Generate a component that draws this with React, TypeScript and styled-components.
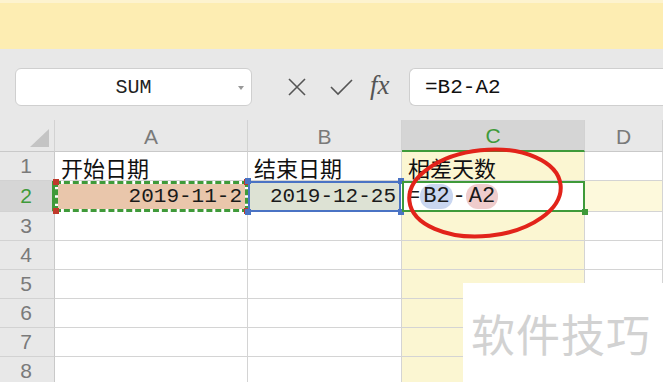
import React from 'react'
import styled, { createGlobalStyle } from 'styled-components'

const GlobalStyle = createGlobalStyle`
  html, body {
    margin: 0;
    padding: 0;
    width: 663px;
    height: 382px;
    overflow: hidden;
    background: #ffffff;
  }
`

const COLS = '55px 193px 154px 183px 1fr'
const ROWS = '32px 29px 31px 29px 29px 29px 29px 29px 29px'

const Page = styled.div`
  width: 663px;
  height: 382px;
  display: flex;
  flex-direction: column;
  overflow: hidden;
  position: relative;
  font-family: 'Liberation Sans', Arial, sans-serif;
`

const Ribbon = styled.div`
  height: 49px;
  flex: none;
  background: #fdedb2;
  border-top: 3px solid #fdf3cf;
  box-sizing: border-box;
`

const Toolbar = styled.div`
  height: 71px;
  flex: none;
  background: #e8e8e8;
  display: flex;
  align-items: flex-start;
  padding: 19px 0 0 15px;
  box-sizing: border-box;
`

const NameBox = styled.div`
  width: 237px;
  height: 38px;
  box-sizing: border-box;
  background: #fff;
  border: 1px solid #cfcfcf;
  border-radius: 6px;
  display: flex;
  align-items: center;
  justify-content: center;
  position: relative;
  font-family: 'Liberation Mono', monospace;
  font-size: 20px;
  color: #222;
`

const Caret = styled.span`
  position: absolute;
  right: 7px;
  top: 17px;
  width: 0;
  height: 0;
  border-left: 3px solid transparent;
  border-right: 3px solid transparent;
  border-top: 4px solid #999;
`

const Tools = styled.div`
  display: flex;
  align-items: center;
  height: 38px;
  gap: 22px;
  margin-left: 35px;
  width: 122px;
`

const Fx = styled.span`
  font-family: 'Liberation Serif', serif;
  font-style: italic;
  font-size: 27px;
  color: #555;
  margin-left: -6px;
  margin-top: -3px;
`

const FormulaBox = styled.div`
  flex: 1;
  height: 38px;
  box-sizing: border-box;
  background: #fff;
  border: 1px solid #cfcfcf;
  border-right: none;
  border-radius: 6px 0 0 6px;
  display: flex;
  align-items: center;
  padding-left: 15px;
  font-family: 'Liberation Mono', monospace;
  font-size: 21px;
  color: #111;
`

const Sheet = styled.div`
  flex: 1;
  display: grid;
  grid-template-columns: ${COLS};
  grid-template-rows: ${ROWS};
  position: relative;
`

const ColHead = styled.div<{ $active?: boolean }>`
  background: ${(p) => (p.$active ? '#d5d5d5' : '#e8e8e8')};
  border-right: 1px solid #d2d2d2;
  border-bottom: ${(p) => (p.$active ? '2px solid #3f9a3a' : '1px solid #c9c9c9')};
  display: flex;
  align-items: center;
  justify-content: center;
  font-size: 21px;
  color: ${(p) => (p.$active ? '#3f9a3a' : '#7a7a7a')};
  padding-top: 2px;
  box-sizing: border-box;
`

const Corner = styled.div`
  background: #e8e8e8;
  border-right: 1px solid #d2d2d2;
  border-bottom: 1px solid #c9c9c9;
  position: relative;
`

const Triangle = styled.span`
  position: absolute;
  right: 5px;
  bottom: 4px;
  width: 0;
  height: 0;
  border-left: 19px solid transparent;
  border-bottom: 18px solid #c4c4c4;
`

const RowHead = styled.div<{ $active?: boolean }>`
  background: ${(p) => (p.$active ? '#d6d6d6' : '#e8e8e8')};
  border-right: ${(p) => (p.$active ? '3px solid #3f9a3a' : '1px solid #c9c9c9')};
  border-bottom: 1px solid #d2d2d2;
  display: flex;
  align-items: center;
  justify-content: center;
  font-size: 21px;
  color: ${(p) => (p.$active ? '#3f9a3a' : '#7a7a7a')};
  box-sizing: border-box;
  padding-right: ${(p) => (p.$active ? '0' : '2px')};
`

const Cell = styled.div<{ $fill?: string }>`
  background: ${(p) => p.$fill || '#fff'};
  border-right: 1px solid #d4d4d4;
  border-bottom: 1px solid #d4d4d4;
  box-sizing: border-box;
  display: flex;
  align-items: center;
  padding: 2px 4px 0 6px;
  font-family: 'Noto Sans CJK SC', sans-serif;
  font-size: 22px;
  line-height: 26px;
  color: #111;
  white-space: nowrap;
`

const RefCell = styled.div<{ $fill: string; $line: string }>`
  position: relative;
  box-sizing: border-box;
  display: flex;
  align-items: center;
  justify-content: flex-end;
  padding-right: 3px;
  font-family: 'Liberation Mono', monospace;
  font-size: 21px;
  color: #1a1a1a;
  white-space: nowrap;
  background: ${(p) => p.$fill};
  border: 2px solid ${(p) => p.$line};
  margin: 0 1px 0 0;
`

const AntsCell = styled(RefCell)`
  border: 3px dashed #3f9a3a;
  background: linear-gradient(${(p) => p.$fill}, ${(p) => p.$fill}) padding-box,
    #ffffff border-box;
  margin: 0;
`

const Handle = styled.span<{ $c: string; $x: 'l' | 'r'; $y: 't' | 'b' }>`
  position: absolute;
  width: 6px;
  height: 6px;
  background: ${(p) => p.$c};
  ${(p) => (p.$x === 'l' ? 'left: -5px;' : 'right: -5px;')}
  ${(p) => (p.$y === 't' ? 'top: -5px;' : 'bottom: -5px;')}
`

const EditCell = styled.div`
  position: relative;
  box-sizing: border-box;
  background: #fff;
  border: 2px solid #3f9a3a;
  display: flex;
  align-items: center;
  padding-left: 3px;
  font-family: 'Liberation Mono', monospace;
  font-size: 22px;
  color: #1a1a1a;
`

const Pill = styled.span<{ $c: string }>`
  background: ${(p) => p.$c};
  border-radius: 12px;
  padding: 0 3px;
  line-height: 25px;
`

const Ellipse = styled.svg`
  position: absolute;
  left: 397px;
  top: 24px;
  overflow: visible;
  pointer-events: none;
`

const Watermark = styled.div`
  position: absolute;
  right: 0;
  bottom: 0;
  width: 200px;
  height: 99px;
  background: #fff;
  display: flex;
  align-items: center;
  padding-left: 8px;
  box-sizing: border-box;
  font-family: 'Noto Sans CJK SC', sans-serif;
  font-size: 44px;
  letter-spacing: 1px;
  color: #d2d2d2;
`

const YELLOW = '#fbf6d2'
const ROW_YELLOW = '#fdf9dc'

const App: React.FC = () => {
  const emptyRows = [3, 4, 5, 6, 7, 8]
  return (
    <Page>
      <GlobalStyle />
      <Ribbon />
      <Toolbar>
        <NameBox>
          SUM
          <Caret />
        </NameBox>
        <Tools>
          <svg width="20" height="20" viewBox="0 0 20 20">
            <path d="M2 2 L18 18 M18 2 L2 18" stroke="#555" strokeWidth="1.6" fill="none" />
          </svg>
          <svg width="25" height="20" viewBox="0 0 25 20">
            <path d="M2 10 L9 17 L23 3" stroke="#555" strokeWidth="1.6" fill="none" />
          </svg>
          <Fx>fx</Fx>
        </Tools>
        <FormulaBox>=B2-A2</FormulaBox>
      </Toolbar>
      <Sheet>
        <Corner>
          <Triangle />
        </Corner>
        <ColHead>A</ColHead>
        <ColHead>B</ColHead>
        <ColHead $active>C</ColHead>
        <ColHead>D</ColHead>

        <RowHead>1</RowHead>
        <Cell>开始日期</Cell>
        <Cell>结束日期</Cell>
        <Cell $fill={YELLOW}>相差天数</Cell>
        <Cell />

        <RowHead $active>2</RowHead>
        <AntsCell $fill="#e9c6ab" $line="#3f9a3a">
          2019-11-2
          <Handle $c="#c0392b" $x="l" $y="t" />
          <Handle $c="#c0392b" $x="r" $y="t" />
          <Handle $c="#c0392b" $x="l" $y="b" />
          <Handle $c="#c0392b" $x="r" $y="b" />
        </AntsCell>
        <RefCell $fill="#dde2d4" $line="#4a73c4">
          2019-12-25
          <Handle $c="#4a73c4" $x="l" $y="t" />
          <Handle $c="#4a73c4" $x="r" $y="t" />
          <Handle $c="#4a73c4" $x="l" $y="b" />
          <Handle $c="#4a73c4" $x="r" $y="b" />
        </RefCell>
        <EditCell>
          =<Pill $c="#c9d6f0">B2</Pill>-<Pill $c="#efcccc">A2</Pill>
          <Handle $c="#3f9a3a" $x="r" $y="b" />
        </EditCell>
        <Cell $fill={ROW_YELLOW} />

        {emptyRows.map((n) => (
          <React.Fragment key={n}>
            <RowHead>{n}</RowHead>
            <Cell />
            <Cell />
            <Cell $fill={YELLOW} />
            <Cell />
          </React.Fragment>
        ))}

        <Ellipse width="180" height="100">
          <ellipse
            cx="88"
            cy="49"
            rx="76"
            ry="43"
            transform="rotate(-6 88 49)"
            fill="none"
            stroke="#e2231a"
            strokeWidth="4"
          />
        </Ellipse>
      </Sheet>
      <Watermark>软件技巧</Watermark>
    </Page>
  )
}

export default App
